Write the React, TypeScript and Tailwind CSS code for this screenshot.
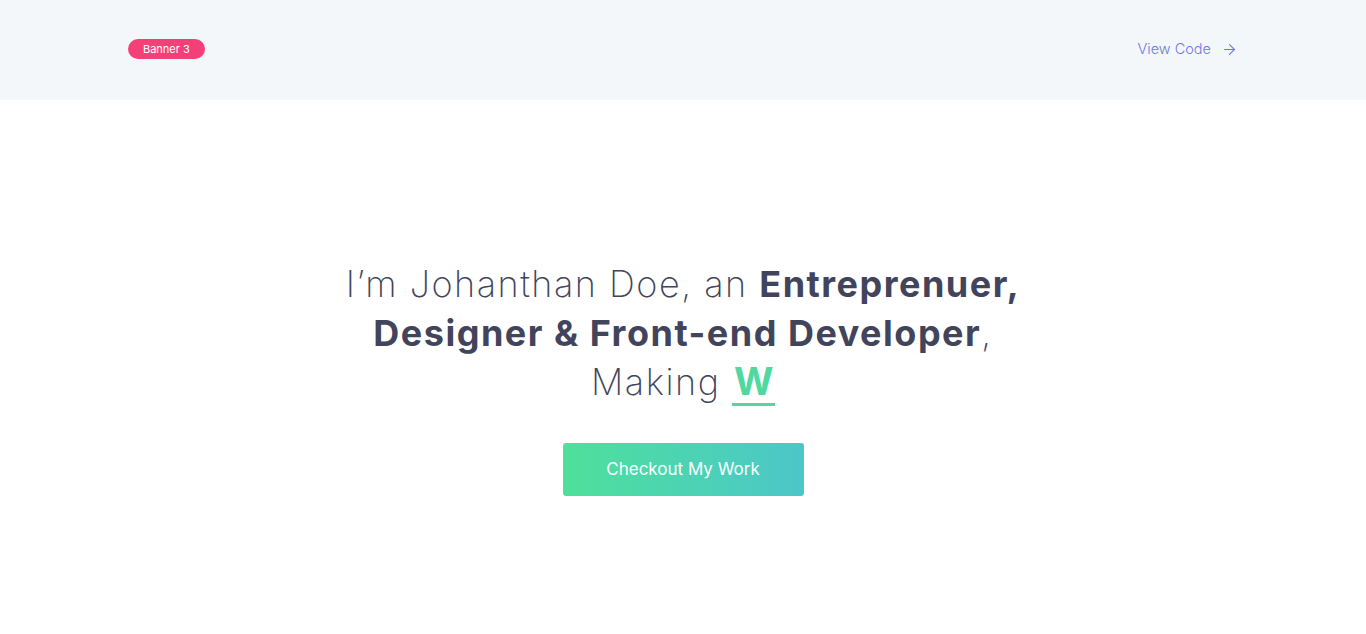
import { FiArrowRight } from "react-icons/fi";

const App = () => {
  return (
    <div className="min-h-screen bg-white font-['Inter','Noto_Sans',sans-serif]">
      <header className="h-[100px] bg-[#f4f7fa]">
        <div className="mx-auto flex h-full max-w-[1110px] items-center justify-between pb-[2px]">
          <span className="rounded-full bg-[#f43f78] px-[15px] py-[3px] text-[11px] leading-[14px] text-white">
            Banner 3
          </span>
          <a href="#" className="flex items-center gap-[10px] text-[14.5px] font-light text-[#6f78e0]">
            View Code
            <FiArrowRight size={17} strokeWidth={1.5} />
          </a>
        </div>
      </header>

      <section className="flex flex-col items-center pt-[160px]">
        <h1 className="max-w-[760px] text-center text-[36px] leading-[49px] font-extralight tracking-[1.5px] text-[#41445a]">
          I’m Johanthan Doe, an <b className="font-bold">Entreprenuer,</b>
          <br />
          <b className="font-bold">Designer &amp; Front-end Developer</b>,
          <br />
          Making{" "}
          <span className="inline-block border-b-[3px] border-[#4fd8a0] pl-[2px] text-[38px] leading-[43px] font-bold text-[#4fd8a0]">
            W
          </span>
        </h1>

        <button className="mt-[36px] h-[53px] w-[241px] rounded-[3px] bg-gradient-to-r from-[#4fe09a] to-[#4cc6c8] text-[17px] text-white">
          Checkout My Work
        </button>
      </section>
    </div>
  );
};

export default App;
